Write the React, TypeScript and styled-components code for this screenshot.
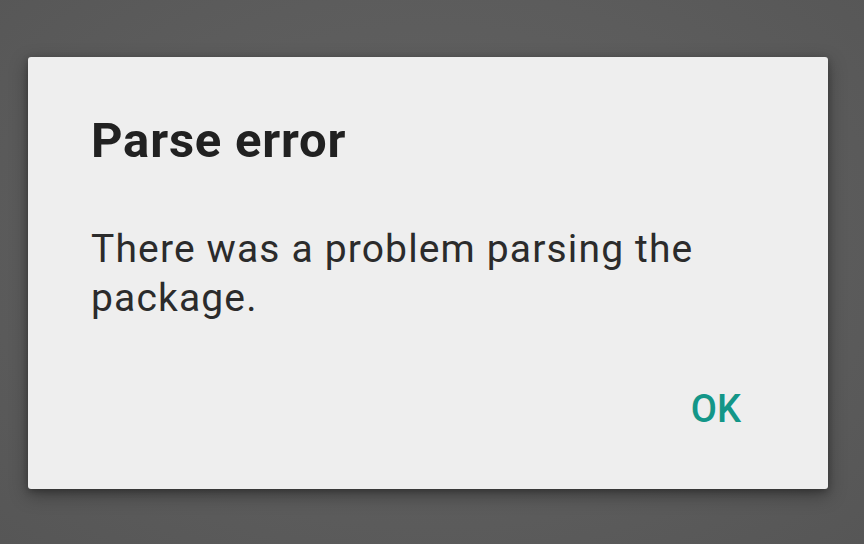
import styled, { createGlobalStyle } from "styled-components"

const GlobalStyle = createGlobalStyle`
  html, body {
    margin: 0;
    padding: 0;
    background: #5d5d5d;
  }
  body {
    font-family: Roboto, "Noto Sans", "Liberation Sans", sans-serif;
  }
`

const Screen = styled.div`
  width: 864px;
  height: 544px;
  box-sizing: border-box;
  padding: 57px 0 0 28px;
  background: radial-gradient(ellipse at 50% 45%, #636363 0%, #5c5c5c 60%, #565656 100%);
`

const Dialog = styled.div`
  width: 800px;
  height: 432px;
  box-sizing: border-box;
  padding: 55px 63px 0 63px;
  background: #eeeeee;
  border-radius: 3px;
  box-shadow: 0 6px 18px rgba(0, 0, 0, 0.35), 0 2px 6px rgba(0, 0, 0, 0.25);
  display: flex;
  flex-direction: column;
`

const Title = styled.h1`
  margin: 0;
  font-size: 49px;
  line-height: 58px;
  font-weight: 700;
  letter-spacing: 0.8px;
  color: #212121;
`

const Message = styled.p`
  margin: 55px 0 0 0;
  font-size: 39px;
  line-height: 49px;
  font-weight: 400;
  letter-spacing: 1.15px;
  color: #2b2b2b;
  max-width: 660px;
`

const Actions = styled.div`
  display: flex;
  justify-content: flex-end;
  margin-top: 64px;
  margin-right: 24px;
`

const TextButton = styled.button`
  border: none;
  background: none;
  padding: 0;
  font-family: inherit;
  font-size: 38px;
  line-height: 44px;
  font-weight: 500;
  color: #139688;
  cursor: pointer;
`

export default function App() {
  return (
    <>
      <GlobalStyle />
      <Screen>
        <Dialog>
          <Title>Parse error</Title>
          <Message>There was a problem parsing the package.</Message>
          <Actions>
            <TextButton>OK</TextButton>
          </Actions>
        </Dialog>
      </Screen>
    </>
  )
}
